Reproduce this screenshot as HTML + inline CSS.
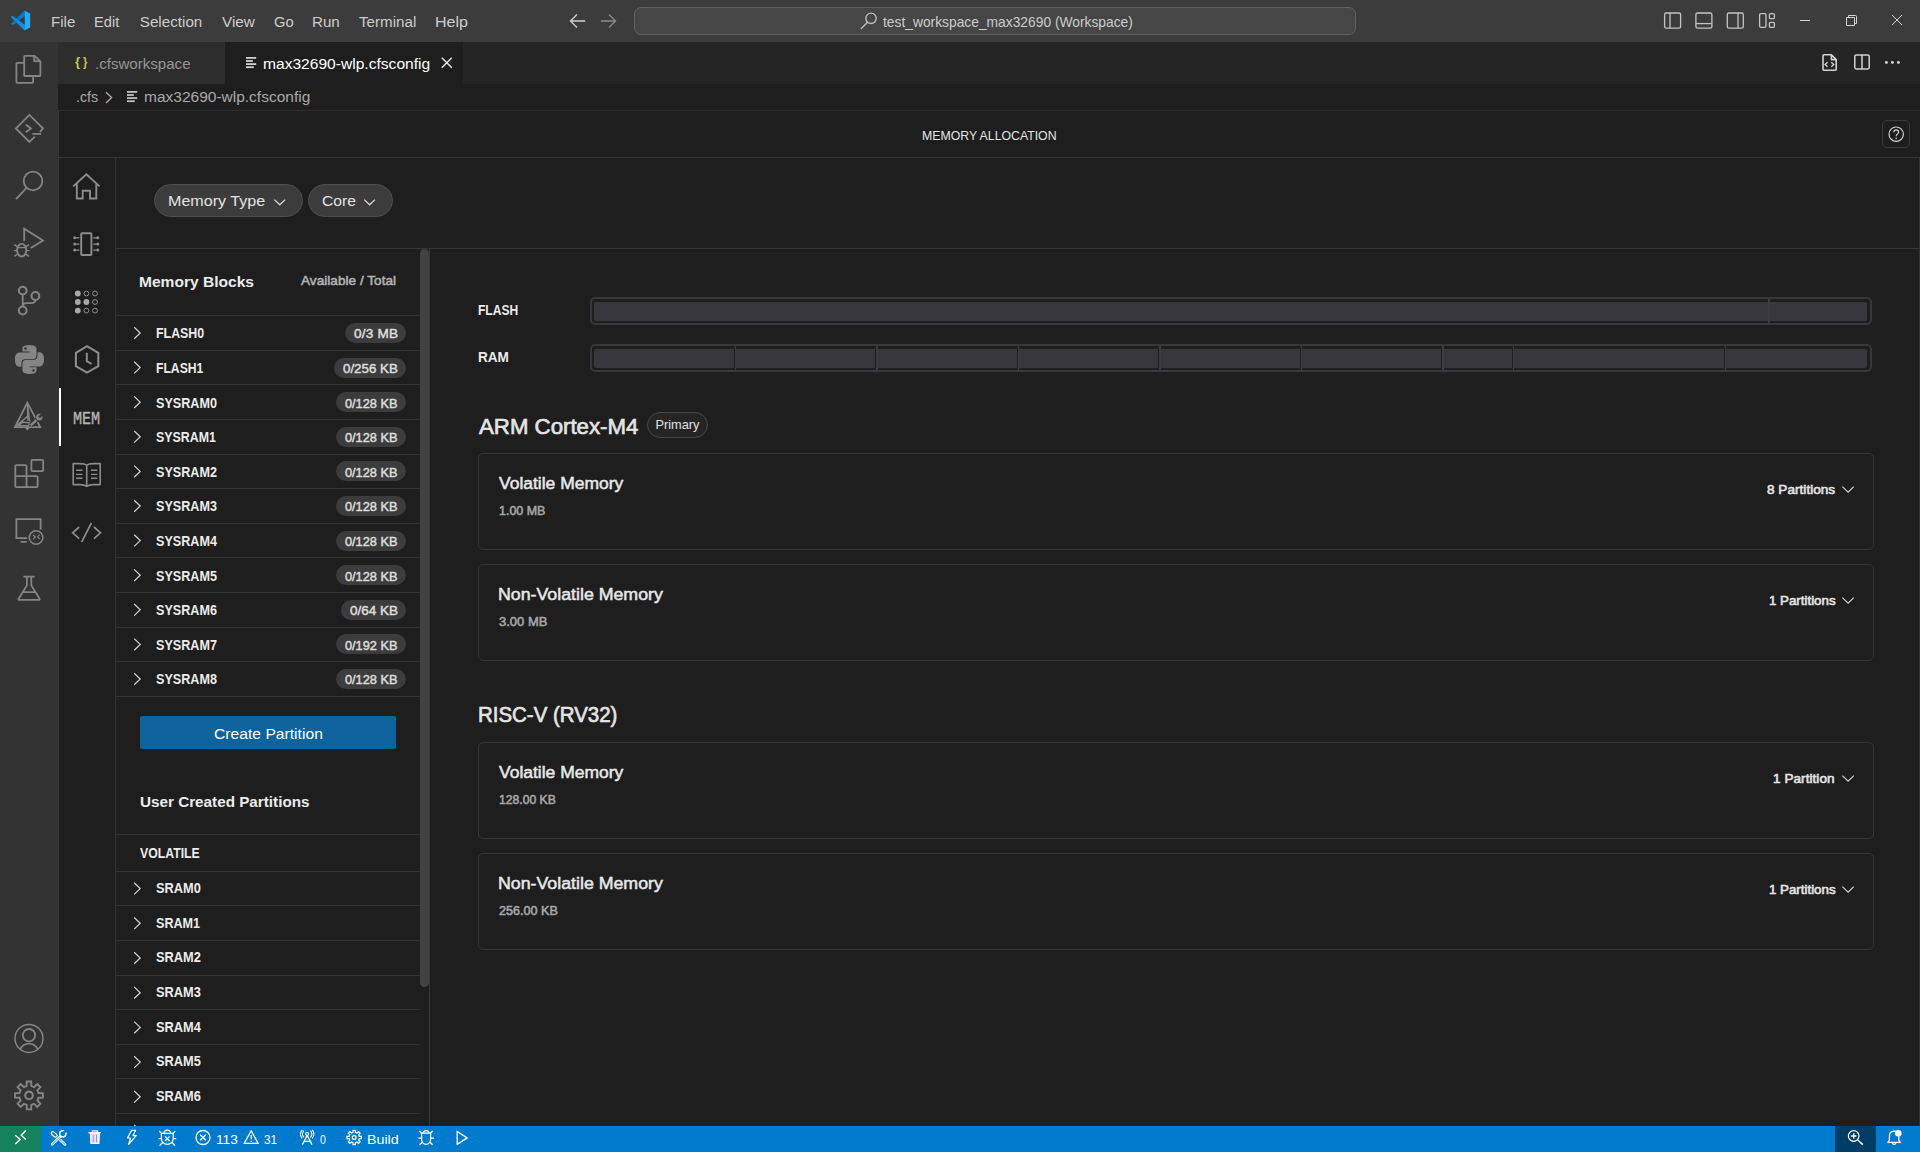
<!DOCTYPE html>
<html lang="en">
<head>
<meta charset="utf-8">
<title>max32690-wlp.cfsconfig - test_workspace_max32690 (Workspace)</title>
<style>
*{box-sizing:border-box;margin:0;padding:0}
html,body{width:1920px;height:1152px;overflow:hidden;background:#1e1e1e}
body{position:relative;font-family:"Liberation Sans",sans-serif;color:#cccccc;font-size:15px;-webkit-font-smoothing:antialiased}
.abs{position:absolute}
.t{position:absolute;white-space:nowrap;line-height:1;transform-origin:0 0}
.b{font-weight:bold}
svg{position:absolute;overflow:visible}
.hl{position:absolute;height:1px;background:#333333}
.vl{position:absolute;width:1px;background:#333333}
/* title bar */
#titlebar{left:0;top:0;width:1920px;height:42px;background:#3c3c3c}
#search{left:634px;top:7px;width:722px;height:28px;background:#464646;border:1px solid #616161;border-radius:7px}
/* activity bar */
#activity{left:0;top:42px;width:58px;height:1084px;background:#333333}
/* tabs */
#tabs{left:58px;top:42px;width:1862px;height:42px;background:#252526}
#tab1{left:58px;top:42px;width:167px;height:42px;background:#2d2d2d}
#tab2{left:225px;top:42px;width:238px;height:42px;background:#1e1e1e}
/* status */
#status{left:0;top:1126px;width:1920px;height:26px;background:#007acc}
#remote{left:0;top:1126px;width:41px;height:26px;background:#16825d}
#zoomitem{left:1835px;top:1126px;width:41px;height:26px;background:#003d66}
/* webview */
.pill{position:absolute;height:33px;border-radius:17px;background:#3c3c3c;border:1px solid #4e4e4e}
.badge{position:absolute;height:20px;border-radius:10px;background:#3c3c3c}
.card{position:absolute;left:478px;width:1396px;height:97px;border:1px solid #363636;border-radius:5px}
.bar{position:absolute;left:590px;width:1282px;height:28px;border:2px solid #37373d;border-radius:5px}
.seg{position:absolute;top:2px;height:20px;background:#37373d}
.sep{position:absolute;top:0;width:2px;height:24px;background:#37373d}
#scroll{left:420px;top:249px;width:9px;height:738px;background:#424242;border-radius:5px}
#createbtn{left:140px;top:716px;width:256px;height:33px;background:#0e639c}
</style>
</head>
<body>
<!-- ===== TITLE BAR ===== -->
<div id="titlebar" class="abs"></div>
<div id="search" class="abs"></div>
<!-- ===== ACTIVITY BAR ===== -->
<div id="activity" class="abs"></div>
<!-- ===== TABS ===== -->
<div id="tabs" class="abs"></div>
<div id="tab1" class="abs"></div>
<div id="tab2" class="abs"></div>
<!-- ===== WEBVIEW LINES ===== -->
<div class="hl" style="left:59px;top:110px;width:1861px;background:#2f2f2f"></div>
<div class="hl" style="left:59px;top:157px;width:1861px;background:#353535"></div>
<div class="vl" style="left:115px;top:158px;height:968px"></div>
<div class="hl" style="left:116px;top:248px;width:1804px;background:#353535"></div>
<div class="vl" style="left:429px;top:249px;height:877px;background:#383838"></div>
<div class="vl" style="left:1919px;top:158px;height:968px"></div>
<svg style="left:0;top:0" width="42" height="42" viewBox="0 0 42 42">
<polygon points="10.9,23.9 12.5,25.2 25.2,15.9 25.2,10.8 23.9,10.9" fill="#0079c6"/>
<polygon points="10.9,17.0 12.5,15.7 25.2,25.0 25.2,30.2 23.9,30.0" fill="#0b8fe2"/>
<polygon points="24.8,10.8 30.2,13.5 30.2,27.4 24.8,30.2" fill="#25a9f1"/>
</svg>
<span class="t" style="left:50.91px;top:13.70px;font-size:15.2px;color:#cccccc;transform:scaleX(0.9946);">File</span>
<span class="t" style="left:94.04px;top:13.70px;font-size:15.2px;color:#cccccc;transform:scaleX(0.9634);">Edit</span>
<span class="t" style="left:139.80px;top:13.70px;font-size:15.2px;color:#cccccc;">Selection</span>
<span class="t" style="left:221.50px;top:13.70px;font-size:15.2px;color:#cccccc;transform:scaleX(1.0069);">View</span>
<span class="t" style="left:273.80px;top:13.70px;font-size:15.2px;color:#cccccc;transform:scaleX(0.9741);">Go</span>
<span class="t" style="left:312.10px;top:13.70px;font-size:15.2px;color:#cccccc;transform:scaleX(0.9957);">Run</span>
<span class="t" style="left:359.40px;top:13.70px;font-size:15.2px;color:#cccccc;transform:scaleX(0.9980);">Terminal</span>
<span class="t" style="left:435.24px;top:13.70px;font-size:15.2px;color:#cccccc;transform:scaleX(1.0574);">Help</span>
<span class="t" style="left:883.30px;top:14.60px;font-size:14.2px;color:#cccccc;transform:scaleX(0.9731);">test_workspace_max32690 (Workspace)</span>
<svg style="left:0;top:0" width="1920" height="42" viewBox="0 0 1920 42" fill="none" stroke-linecap="square">
<g stroke="#d0d0d0" stroke-width="1.3"><path d="M570.5 21H584.5M576.5 15L570.5 21L576.5 27"/></g>
<g stroke="#8a8a8a" stroke-width="1.3"><path d="M601.5 21H615.5M609.5 15L615.5 21L609.5 27"/></g>
<g stroke="#bdbdbd" stroke-width="1.4" stroke-linecap="round"><circle cx="871" cy="18.3" r="5.2"/><path d="M867.5 22.3L861.3 28.6"/></g>
<g stroke="#c4c4c4" stroke-width="1.3" stroke-linecap="butt">
<rect x="1664.6" y="13" width="16" height="15.2" rx="1.6"/><path d="M1670 13V28.2"/>
<rect x="1695.9" y="13" width="16" height="15.2" rx="1.6"/><path d="M1695.9 23.6H1711.9"/>
<rect x="1727.3" y="13" width="16" height="15.2" rx="1.6"/><path d="M1738 13V28.2"/>
<rect x="1759.6" y="13.6" width="6.4" height="13.8" rx="1.4"/><rect x="1769.4" y="13.6" width="5" height="5" rx="1.2"/><rect x="1769.4" y="22.4" width="5" height="5" rx="1.2"/>
</g>
<g stroke="#d4d4d4" stroke-width="1" stroke-linecap="butt">
<path d="M1800 20.5H1810"/>
<path d="M1846.5 17.5H1854.5V25.5H1846.5Z"/><path d="M1848.5 17.5V15.5H1855.5Q1856.5 15.5 1856.5 16.5V23.5H1854.5"/>
<path d="M1892 15L1902 25M1902 15L1892 25"/>
</g>
</svg>
<svg style="left:0;top:0" width="58" height="1126" viewBox="0 0 58 1126" fill="none" stroke="#858585" stroke-width="1.8" stroke-linejoin="round">
<path d="M24.2 76V56.6Q24.2 55.9 24.9 55.9H34.6L40.4 61.4V75.3Q40.4 76 39.7 76H24.9Q24.2 76 24.2 75.3M34.2 56V61.2H40.2"/>
<path d="M24 62.9H17.1Q16.4 62.9 16.4 63.6V82.1Q16.4 82.8 17.1 82.8H32.4Q33.1 82.8 33.1 82.1V76.4"/>
<path d="M40 132L42.9 128.4L29.4 114.9L15.9 128.4L29.4 141.9L34.8 136.6" stroke-linejoin="miter"/><path d="M25.7 124.6L31 128.4L25.7 132.2M32.4 133.8H41.2" stroke-linejoin="miter"/>
<circle cx="33" cy="181" r="9.3"/><path d="M26.6 187.9L16 199.2"/>
<path d="M24.2 241V228.7L43 240.4L30.8 248" stroke-linejoin="miter"/>
<ellipse cx="21.7" cy="250.2" rx="4.6" ry="6.3"/><path d="M17.3 247.6H26.1M14.3 244.6L17.4 246.6M29.1 244.6L26 246.6M14 250.6H17.1M29.4 250.6H26.3M14.3 256.4L17.6 254.2M29.1 256.4L25.8 254.2" stroke-width="1.4"/>
<circle cx="22.7" cy="290.6" r="3.9" stroke-width="2"/><circle cx="35.4" cy="296" r="3.9" stroke-width="2"/><circle cx="22.7" cy="310.5" r="3.9" stroke-width="2"/><path d="M22.7 294.8V306.3M35.4 300.2Q35 303.2 31 303.2H26Q23.2 303.4 22.8 305.6"/>
<g transform="translate(14.9,345) scale(1.215)" fill="#858585" stroke="none"><path d="M11.9 0C5.8 0 6.2 2.6 6.2 2.6V5.4H12V6.2H3.9S0 5.8 0 11.9C0 18 3.4 17.8 3.4 17.8H5.4V15S5.3 11.6 8.8 11.6H14.6S17.8 11.6 17.8 8.4V3.2S18.3 0 11.9 0ZM8.7 1.8A1.05 1.05 0 1 1 8.7 3.9A1.05 1.05 0 1 1 8.7 1.8Z" fill-rule="evenodd"/><path d="M12.1 23.8C18.2 23.8 17.8 21.2 17.8 21.2V18.4H12V17.6H20.1S24 18 24 11.9C24 5.8 20.6 6 20.6 6H18.6V8.800000000000001S18.7 12.2 15.2 12.2H9.4S6.2 12.2 6.2 15.4V20.6S5.7 23.8 12.1 23.8ZM15.3 22A1.05 1.05 0 1 1 15.3 19.9A1.05 1.05 0 1 1 15.3 22Z" fill-rule="evenodd"/></g>
<path d="M27.3 402.6L15 427.2H40.2Z" stroke-width="1.8" stroke-linejoin="miter"/>
<path d="M27.3 403L27.9 420.4M27.6 405L29.8 421.6M15.6 426.6L27.2 416.4M24 419.2L27.8 416.6V421M22.6 421.8L31.2 423.2M18.6 425.6L22.8 422.2L30 423.2L28.4 425.6Z" stroke-width="1.3" stroke-linejoin="miter"/>
<path d="M24.8 427.8H29.8L27.3 430.6Z" fill="#858585" stroke="none"/>
<path d="M30.8 425.4L37.6 419" stroke="#333333" stroke-width="4.4"/><path d="M30.8 425.4L37.6 419" stroke-width="2.5"/>
<circle cx="39.3" cy="417.2" r="3.7" fill="#858585" stroke="#333333" stroke-width="0.8"/><path d="M39.1 417.4L43.4 413.2" stroke="#333333" stroke-width="2.3"/>
<path d="M26.5 476.1V466.1Q26.5 465.1 25.5 465.1H16.3Q15.3 465.1 15.3 466.1V486.1Q15.3 487.1 16.3 487.1H36.6Q37.6 487.1 37.6 486.1V477.1Q37.6 476.1 36.6 476.1H15.3M26.5 476.1V487.1"/><rect x="31.4" y="459.9" width="11.8" height="11.3" rx="1.2"/>
<path d="M27.2 538.2H16.4V519.2H40.6V529.4M20.6 541.8H26.8" stroke-linejoin="miter"/><circle cx="36.05" cy="537.5" r="6.8" stroke-width="1.5"/><path d="M33 535L35.4 537L33 539.2M39.8 534.6L37.4 536.8L39.8 539" stroke-width="1.1"/>
<path d="M23.4 576.7H34.7M26.9 577V585.4L18.6 598.8Q18.2 599.9 19.4 599.9H38.8Q40 599.9 39.6 598.8L31.3 585.4V577M22.5 592.1H35.7"/>
<circle cx="29" cy="1038.4" r="14" stroke-width="1.5"/><circle cx="29" cy="1035.2" r="6.2"/><path d="M20.4 1049.2A9.4 9.4 0 0 1 37.6 1049.2"/>
<path d="M26.71 1085.87L26.79 1081.47L31.21 1081.47L31.29 1085.87L34.12 1087.04L37.29 1083.99L40.41 1087.11L37.36 1090.28L38.53 1093.11L42.93 1093.19L42.93 1097.61L38.53 1097.69L37.36 1100.52L40.41 1103.69L37.29 1106.81L34.12 1103.76L31.29 1104.93L31.21 1109.33L26.79 1109.33L26.71 1104.93L23.88 1103.76L20.71 1106.81L17.59 1103.69L20.64 1100.52L19.47 1097.69L15.07 1097.61L15.07 1093.19L19.47 1093.11L20.64 1090.28L17.59 1087.11L20.71 1083.99L23.88 1087.04Z" stroke-width="1.9" stroke-linejoin="miter"/><circle cx="29" cy="1095.4" r="3.8" stroke-width="2.1"/>
</svg>
<span class="t" style="left:74.90px;top:55.20px;font-size:13.6px;color:#cbcb41;font-weight:bold;transform:scaleX(0.9600);">{</span>
<span class="t" style="left:83.00px;top:55.20px;font-size:13.6px;color:#cbcb41;font-weight:bold;transform:scaleX(0.8167);">}</span>
<span class="t" style="left:95.41px;top:56.10px;font-size:15.2px;color:#969696;transform:scaleX(0.9929);">.cfsworkspace</span>
<svg style="left:245.8px;top:56.8px" width="11" height="12" viewBox="0 0 11 12" fill="#d0d0d0"><rect x="0" y="0" width="10.2" height="1.8"/><rect x="0" y="3.1" width="6.8" height="1.8"/><rect x="0" y="6.2" width="10.2" height="1.8"/><rect x="0" y="9.3" width="7.8" height="1.8"/></svg>
<span class="t" style="left:263.27px;top:56.10px;font-size:15.2px;color:#ffffff;transform:scaleX(1.0261);">max32690-wlp.cfsconfig</span>
<svg style="left:0;top:42px" width="1920" height="42" viewBox="0 42 1920 42" fill="none" stroke="#e6e6e6" stroke-width="1.5"><path d="M441.8 57.8L451.8 67.8M451.8 57.8L441.8 67.8"/></svg>
<svg style="left:1800px;top:42px" width="120" height="42" viewBox="1800 42 120 42" fill="none" stroke="#d2d2d2" stroke-width="1.6" stroke-linejoin="round"><path d="M1831.4 54.8H1824Q1823 54.8 1823 55.8V69.2Q1823 70.2 1824 70.2H1835.2Q1836.2 70.2 1836.2 69.2V59.6ZM1831.4 54.8V59.6H1836.2" /><path d="M1827.5 62.3L1825.1 64.5L1827.5 66.7M1831.3 62.3L1833.7 64.5L1831.3 66.7" stroke-width="1.4" stroke-linejoin="miter"/><rect x="1854.8" y="55" width="14.4" height="14" rx="1.4" stroke-width="1.5"/><path d="M1862 55V69" stroke-width="1.5"/><g fill="#d2d2d2" stroke="none"><circle cx="1886.4" cy="62.5" r="1.45"/><circle cx="1892.4" cy="62.5" r="1.45"/><circle cx="1898.4" cy="62.5" r="1.45"/></g></svg>
<span class="t" style="left:76.26px;top:89.20px;font-size:15.2px;color:#a9a9a9;transform:scaleX(0.9378);">.cfs</span>
<svg style="left:0;top:84px" width="400" height="26" viewBox="0 84 400 26" fill="none" stroke="#a9a9a9" stroke-width="1.4"><path d="M106 92.2L111.6 97.6L106 103"/></svg>
<svg style="left:126.8px;top:91.2px" width="11" height="12" viewBox="0 0 11 12" fill="#c0c0c0"><rect x="0" y="0" width="10.2" height="1.8"/><rect x="0" y="3.1" width="6.8" height="1.8"/><rect x="0" y="6.2" width="10.2" height="1.8"/><rect x="0" y="9.3" width="7.8" height="1.8"/></svg>
<span class="t" style="left:144.18px;top:89.20px;font-size:15.2px;color:#a9a9a9;transform:scaleX(1.0206);">max32690-wlp.cfsconfig</span>
<span class="t" style="left:922.05px;top:129.95px;font-size:12.9px;color:#e4e4e4;transform:scaleX(0.9535);">MEMORY ALLOCATION</span>
<div class="abs" style="left:1882px;top:120px;width:28px;height:28px;border:1px solid #3a3a3a;border-radius:5px"></div>
<svg style="left:1882px;top:120px" width="28" height="28" viewBox="0 0 28 28" fill="none" stroke="#d0d0d0" stroke-width="1.2"><circle cx="14.2" cy="14.2" r="7.2"/><path d="M11.8 12.2Q11.8 9.8 14.2 9.8Q16.6 9.8 16.6 12Q16.6 13.4 15.2 14.2Q14.2 14.8 14.2 16.2" stroke-width="1.2"/><circle cx="14.2" cy="18.4" r="0.8" fill="#d0d0d0" stroke="none"/></svg>
<div class="abs" style="left:58px;top:110px;width:1px;height:1016px;background:#383838"></div>
<div class="abs" style="left:59px;top:388px;width:2px;height:58px;background:#ffffff"></div>
<svg style="left:58px;top:0" width="58" height="1126" viewBox="58 0 58 1126" fill="none" stroke="#8c8c8c" stroke-width="1.9" stroke-linejoin="miter">
<path d="M73.2 186.4L86.4 174.2L99.6 186.4M76.8 183.6V198.5H82.7V190.8H90V198.5H96.3V183.6"/>
<rect x="81.2" y="233.2" width="10.2" height="21.8" rx="0.8"/><g stroke-width="1.3"><path d="M75 237.8H79.4M75 244.1H79.4M75 250.1H79.4M93.2 237.8H97.6M93.2 244.1H97.6M93.2 250.1H97.6"/></g>
<circle cx="74.7" cy="237.8" r="1.5" fill="#8c8c8c" stroke="none"/><circle cx="97.8" cy="237.8" r="1.5" fill="#8c8c8c" stroke="none"/>
<circle cx="74.7" cy="244.1" r="1.5" fill="#8c8c8c" stroke="none"/><circle cx="97.8" cy="244.1" r="1.5" fill="#8c8c8c" stroke="none"/>
<circle cx="74.7" cy="250.1" r="1.5" fill="#8c8c8c" stroke="none"/><circle cx="97.8" cy="250.1" r="1.5" fill="#8c8c8c" stroke="none"/>
<circle cx="77.8" cy="293.5" r="2.9" fill="#a8a8a8" stroke="none"/>
<circle cx="77.8" cy="302" r="2.9" fill="#a8a8a8" stroke="none"/>
<circle cx="77.8" cy="310.6" r="2.9" fill="#a8a8a8" stroke="none"/>
<circle cx="86.4" cy="293.5" r="2.4" stroke-width="0.9" stroke="#9a9a9a"/>
<circle cx="86.4" cy="302" r="2.9" fill="#a8a8a8" stroke="none"/>
<circle cx="86.4" cy="310.6" r="2.4" stroke-width="0.9" stroke="#9a9a9a"/>
<circle cx="95" cy="293.5" r="2.4" stroke-width="0.9" stroke="#9a9a9a"/>
<circle cx="95" cy="302" r="2.4" stroke-width="0.9" stroke="#9a9a9a"/>
<circle cx="95" cy="310.6" r="2.4" stroke-width="0.9" stroke="#9a9a9a"/>
<path d="M87 346.2L98.3 352.8V366.2L87 372.6L75.9 366.2V352.8Z" stroke-width="2.1"/><path d="M86.8 352.8V361.2L91.6 364" stroke-width="2"/>
<path d="M86.7 465.2Q84.5 463.6 80 463.6H73.2V484.6H80Q84.5 484.6 86.7 486.4Q88.9 484.6 93.4 484.6H100.2V463.6H93.4Q88.9 463.6 86.7 465.2V486" stroke-width="1.6" stroke-linejoin="round"/><path d="M76.1 470.3H82.5M76.1 474.4H82.5M76.1 478.3H82.5M91 470.3H97.3M91 474.4H97.3M91 478.3H97.3" stroke-width="1.4"/>
<path d="M79.2 527L72.7 532.8L79.2 538.7M91.4 523L81.6 542.2M94 527L100.5 532.8L94 538.7" stroke-width="1.7"/>
</svg>
<span class="t" style="left:72.62px;top:411.00px;font-size:17.6px;color:#b4b4b4;-webkit-text-stroke:0.35px;letter-spacing:-0.088px;transform:scaleX(0.8600);font-family:'Liberation Mono',monospace;">MEM</span>
<div class="pill" style="left:154px;top:184px;width:149px"></div>
<div class="pill" style="left:308px;top:184px;width:85px"></div>
<span class="t" style="left:167.76px;top:192.75px;font-size:15.5px;color:#e2e2e2;transform:scaleX(1.0383);">Memory Type</span>
<span class="t" style="left:321.80px;top:192.75px;font-size:15.5px;color:#e2e2e2;transform:scaleX(1.0068);">Core</span>
<svg style="left:0;top:158px" width="500" height="90" viewBox="0 158 500 90" fill="none" stroke="#d8d8d8" stroke-width="1.3"><path d="M274.4 199.6L279.8 204.8L285.2 199.6M364.2 199.6L369.6 204.8L375 199.6"/></svg>
<div id="scroll" class="abs"></div>
<span class="t" style="left:139.18px;top:274.10px;font-size:15.2px;color:#ececec;font-weight:bold;transform:scaleX(1.0242);">Memory Blocks</span>
<span class="t" style="left:300.86px;top:274.60px;font-size:12.8px;color:#b4b4b4;-webkit-text-stroke:0.51px;letter-spacing:0.031px;transform:scaleX(1.0600);">Available / Total</span>
<div class="hl" style="left:116px;top:315.0px;width:304px;background:#333333"></div>
<div class="hl" style="left:116px;top:349.7px;width:304px;background:#333333"></div>
<span class="t" style="left:156.20px;top:326.30px;font-size:14.0px;color:#ececec;font-weight:bold;transform:scaleX(0.8854);">FLASH0</span>
<div class="badge" style="left:344.7px;top:323.0px;width:61.3px"></div>
<span class="t" style="left:353.63px;top:328.30px;font-size:12.8px;color:#dcdcdc;-webkit-text-stroke:0.46px;letter-spacing:0.195px;transform:scaleX(1.0600);">0/3 MB</span>
<div class="hl" style="left:116px;top:384.3px;width:304px;background:#333333"></div>
<span class="t" style="left:156.20px;top:360.90px;font-size:14.0px;color:#ececec;font-weight:bold;transform:scaleX(0.8690);">FLASH1</span>
<div class="badge" style="left:334.0px;top:357.6px;width:72.0px"></div>
<span class="t" style="left:342.83px;top:362.90px;font-size:12.8px;color:#dcdcdc;-webkit-text-stroke:0.46px;transform:scaleX(1.0408);">0/256 KB</span>
<div class="hl" style="left:116px;top:418.9px;width:304px;background:#333333"></div>
<span class="t" style="left:156.20px;top:395.50px;font-size:14.0px;color:#ececec;font-weight:bold;transform:scaleX(0.8999);">SYSRAM0</span>
<div class="badge" style="left:336.0px;top:392.2px;width:70.0px"></div>
<span class="t" style="left:344.93px;top:397.50px;font-size:12.8px;color:#dcdcdc;-webkit-text-stroke:0.46px;">0/128 KB</span>
<div class="hl" style="left:116px;top:453.5px;width:304px;background:#333333"></div>
<span class="t" style="left:156.20px;top:430.10px;font-size:14.0px;color:#ececec;font-weight:bold;transform:scaleX(0.8852);">SYSRAM1</span>
<div class="badge" style="left:336.0px;top:426.8px;width:70.0px"></div>
<span class="t" style="left:344.93px;top:432.10px;font-size:12.8px;color:#dcdcdc;-webkit-text-stroke:0.46px;">0/128 KB</span>
<div class="hl" style="left:116px;top:488.1px;width:304px;background:#333333"></div>
<span class="t" style="left:156.20px;top:464.70px;font-size:14.0px;color:#ececec;font-weight:bold;transform:scaleX(0.8999);">SYSRAM2</span>
<div class="badge" style="left:336.0px;top:461.4px;width:70.0px"></div>
<span class="t" style="left:344.93px;top:466.70px;font-size:12.8px;color:#dcdcdc;-webkit-text-stroke:0.46px;">0/128 KB</span>
<div class="hl" style="left:116px;top:522.7px;width:304px;background:#333333"></div>
<span class="t" style="left:156.20px;top:499.30px;font-size:14.0px;color:#ececec;font-weight:bold;transform:scaleX(0.8999);">SYSRAM3</span>
<div class="badge" style="left:336.0px;top:496.0px;width:70.0px"></div>
<span class="t" style="left:344.93px;top:501.30px;font-size:12.8px;color:#dcdcdc;-webkit-text-stroke:0.46px;">0/128 KB</span>
<div class="hl" style="left:116px;top:557.3px;width:304px;background:#333333"></div>
<span class="t" style="left:156.20px;top:533.90px;font-size:14.0px;color:#ececec;font-weight:bold;transform:scaleX(0.8999);">SYSRAM4</span>
<div class="badge" style="left:336.0px;top:530.6px;width:70.0px"></div>
<span class="t" style="left:344.93px;top:535.90px;font-size:12.8px;color:#dcdcdc;-webkit-text-stroke:0.46px;">0/128 KB</span>
<div class="hl" style="left:116px;top:591.9px;width:304px;background:#333333"></div>
<span class="t" style="left:156.20px;top:568.50px;font-size:14.0px;color:#ececec;font-weight:bold;transform:scaleX(0.8999);">SYSRAM5</span>
<div class="badge" style="left:336.0px;top:565.2px;width:70.0px"></div>
<span class="t" style="left:344.93px;top:570.50px;font-size:12.8px;color:#dcdcdc;-webkit-text-stroke:0.46px;">0/128 KB</span>
<div class="hl" style="left:116px;top:626.5px;width:304px;background:#333333"></div>
<span class="t" style="left:156.20px;top:603.10px;font-size:14.0px;color:#ececec;font-weight:bold;transform:scaleX(0.8999);">SYSRAM6</span>
<div class="badge" style="left:340.7px;top:599.8px;width:65.3px"></div>
<span class="t" style="left:349.53px;top:605.10px;font-size:12.8px;color:#dcdcdc;-webkit-text-stroke:0.46px;transform:scaleX(1.0565);">0/64 KB</span>
<div class="hl" style="left:116px;top:661.1px;width:304px;background:#333333"></div>
<span class="t" style="left:156.20px;top:637.70px;font-size:14.0px;color:#ececec;font-weight:bold;transform:scaleX(0.8999);">SYSRAM7</span>
<div class="badge" style="left:336.0px;top:634.4px;width:70.0px"></div>
<span class="t" style="left:345.23px;top:639.70px;font-size:12.8px;color:#dcdcdc;-webkit-text-stroke:0.46px;transform:scaleX(0.9947);">0/192 KB</span>
<div class="hl" style="left:116px;top:695.7px;width:304px;background:#333333"></div>
<span class="t" style="left:156.20px;top:672.30px;font-size:14.0px;color:#ececec;font-weight:bold;transform:scaleX(0.8999);">SYSRAM8</span>
<div class="badge" style="left:336.0px;top:669.0px;width:70.0px"></div>
<span class="t" style="left:344.93px;top:674.30px;font-size:12.8px;color:#dcdcdc;-webkit-text-stroke:0.46px;">0/128 KB</span>
<div id="createbtn" class="abs" style="border-radius:2px"></div>
<span class="t" style="left:213.80px;top:725.90px;font-size:15.2px;color:#ffffff;transform:scaleX(1.0317);">Create Partition</span>
<span class="t" style="left:140.20px;top:793.60px;font-size:15.2px;color:#ececec;font-weight:bold;transform:scaleX(1.0044);">User Created Partitions</span>
<div class="hl" style="left:116px;top:834.0px;width:304px;background:#333333"></div>
<span class="t" style="left:140.00px;top:845.90px;font-size:14.0px;color:#ececec;font-weight:bold;transform:scaleX(0.8755);">VOLATILE</span>
<div class="hl" style="left:116px;top:871.0px;width:304px;background:#333333"></div>
<div class="hl" style="left:116px;top:905.0px;width:304px;background:#333333"></div>
<span class="t" style="left:156.20px;top:880.90px;font-size:14.0px;color:#ececec;font-weight:bold;transform:scaleX(0.9163);">SRAM0</span>
<div class="hl" style="left:116px;top:940.0px;width:304px;background:#333333"></div>
<span class="t" style="left:156.20px;top:915.60px;font-size:14.0px;color:#ececec;font-weight:bold;transform:scaleX(0.8980);">SRAM1</span>
<div class="hl" style="left:116px;top:975.0px;width:304px;background:#333333"></div>
<span class="t" style="left:156.20px;top:950.30px;font-size:14.0px;color:#ececec;font-weight:bold;transform:scaleX(0.9163);">SRAM2</span>
<div class="hl" style="left:116px;top:1009.0px;width:304px;background:#333333"></div>
<span class="t" style="left:156.20px;top:985.00px;font-size:14.0px;color:#ececec;font-weight:bold;transform:scaleX(0.9163);">SRAM3</span>
<div class="hl" style="left:116px;top:1044.0px;width:304px;background:#333333"></div>
<span class="t" style="left:156.20px;top:1019.70px;font-size:14.0px;color:#ececec;font-weight:bold;transform:scaleX(0.9163);">SRAM4</span>
<div class="hl" style="left:116px;top:1078.0px;width:304px;background:#333333"></div>
<span class="t" style="left:156.20px;top:1054.40px;font-size:14.0px;color:#ececec;font-weight:bold;transform:scaleX(0.9163);">SRAM5</span>
<div class="hl" style="left:116px;top:1113.0px;width:304px;background:#333333"></div>
<span class="t" style="left:156.20px;top:1089.10px;font-size:14.0px;color:#ececec;font-weight:bold;transform:scaleX(0.9163);">SRAM6</span>
<svg style="left:0;top:0" width="430" height="1126" viewBox="0 0 430 1126" fill="none" stroke="#cfcfcf" stroke-width="1.25"><path d="M134.2 327.2L140.2 333.0L134.2 338.8M134.2 361.8L140.2 367.6L134.2 373.4M134.2 396.4L140.2 402.2L134.2 408.0M134.2 431.0L140.2 436.8L134.2 442.6M134.2 465.6L140.2 471.4L134.2 477.2M134.2 500.2L140.2 506.0L134.2 511.8M134.2 534.8L140.2 540.6L134.2 546.4M134.2 569.4L140.2 575.2L134.2 581.0M134.2 604.0L140.2 609.8L134.2 615.6M134.2 638.6L140.2 644.4L134.2 650.2M134.2 673.2L140.2 679.0L134.2 684.8M134.2 882.8L140.2 888.6L134.2 894.4M134.2 917.5L140.2 923.3L134.2 929.1M134.2 952.2L140.2 958.0L134.2 963.8M134.2 986.9L140.2 992.7L134.2 998.5M134.2 1021.6L140.2 1027.4L134.2 1033.2M134.2 1056.3L140.2 1062.1L134.2 1067.9M134.2 1091.0L140.2 1096.8L134.2 1102.6M134.2 1124.9L140.2 1130.7L134.2 1136.5"/></svg>
<div class="bar" style="top:297px"><div class="abs" style="left:2px;top:3px;right:3px;height:19px;background:#37373d;border-radius:2px"></div><div class="abs" style="left:1175.50px;top:0;width:1px;height:24px;background:#1e1e1e"></div><div class="abs" style="left:1176.40px;top:0;width:1.5px;height:24px;background:#3c3c43"></div></div>
<div class="bar" style="top:344px"><div class="abs" style="left:2px;top:3px;right:3px;height:19px;background:#37373d;border-radius:2px"></div><div class="abs" style="left:141.85px;top:0;width:1px;height:24px;background:#1e1e1e"></div><div class="abs" style="left:142.75px;top:0;width:1.5px;height:24px;background:#3c3c43"></div><div class="abs" style="left:283.30px;top:0;width:1px;height:24px;background:#1e1e1e"></div><div class="abs" style="left:284.20px;top:0;width:1.5px;height:24px;background:#3c3c43"></div><div class="abs" style="left:424.75px;top:0;width:1px;height:24px;background:#1e1e1e"></div><div class="abs" style="left:425.65px;top:0;width:1.5px;height:24px;background:#3c3c43"></div><div class="abs" style="left:566.20px;top:0;width:1px;height:24px;background:#1e1e1e"></div><div class="abs" style="left:567.10px;top:0;width:1.5px;height:24px;background:#3c3c43"></div><div class="abs" style="left:707.65px;top:0;width:1px;height:24px;background:#1e1e1e"></div><div class="abs" style="left:708.55px;top:0;width:1.5px;height:24px;background:#3c3c43"></div><div class="abs" style="left:849.10px;top:0;width:1px;height:24px;background:#1e1e1e"></div><div class="abs" style="left:850.00px;top:0;width:1.5px;height:24px;background:#3c3c43"></div><div class="abs" style="left:919.82px;top:0;width:1px;height:24px;background:#1e1e1e"></div><div class="abs" style="left:920.72px;top:0;width:1.5px;height:24px;background:#3c3c43"></div><div class="abs" style="left:1132.00px;top:0;width:1px;height:24px;background:#1e1e1e"></div><div class="abs" style="left:1132.90px;top:0;width:1.5px;height:24px;background:#3c3c43"></div></div>
<span class="t" style="left:478.20px;top:303.00px;font-size:14.0px;color:#ececec;font-weight:bold;transform:scaleX(0.8614);">FLASH</span>
<span class="t" style="left:478.20px;top:350.00px;font-size:14.0px;color:#ececec;font-weight:bold;transform:scaleX(0.9705);">RAM</span>
<span class="t" style="left:478.63px;top:415.60px;font-size:22.2px;color:#e4e4e4;-webkit-text-stroke:0.67px;transform:scaleX(1.0022);">ARM Cortex-M4</span>
<div class="abs" style="left:647px;top:412px;width:61px;height:26px;border:1px solid #484848;border-radius:14px;background:#252526"></div>
<span class="t" style="left:655.40px;top:418.70px;font-size:12.8px;color:#e0e0e0;">Primary</span>
<span class="t" style="left:477.71px;top:704.00px;font-size:22.2px;color:#e4e4e4;-webkit-text-stroke:0.67px;transform:scaleX(0.9211);">RISC-V (RV32)</span>
<div class="card" style="top:453px"></div>
<span class="t" style="left:499.05px;top:476.10px;font-size:16.8px;color:#e8e8e8;-webkit-text-stroke:0.50px;transform:scaleX(1.0409);">Volatile Memory</span>
<span class="t" style="left:498.89px;top:505.10px;font-size:12.8px;color:#a6a6a6;-webkit-text-stroke:0.58px;transform:scaleX(0.9725);">1.00 MB</span>
<span class="t" style="left:1766.99px;top:483.90px;font-size:12.8px;color:#e4e4e4;-webkit-text-stroke:0.58px;letter-spacing:0.025px;transform:scaleX(1.0600);">8 Partitions</span>
<div class="card" style="top:564px"></div>
<span class="t" style="left:497.99px;top:587.10px;font-size:16.8px;color:#e8e8e8;-webkit-text-stroke:0.50px;transform:scaleX(1.0582);">Non-Volatile Memory</span>
<span class="t" style="left:498.89px;top:616.10px;font-size:12.8px;color:#a6a6a6;-webkit-text-stroke:0.58px;transform:scaleX(1.0149);">3.00 MB</span>
<span class="t" style="left:1768.59px;top:594.90px;font-size:12.8px;color:#e4e4e4;-webkit-text-stroke:0.58px;transform:scaleX(1.0394);">1 Partitions</span>
<div class="card" style="top:742px"></div>
<span class="t" style="left:499.05px;top:765.10px;font-size:16.8px;color:#e8e8e8;-webkit-text-stroke:0.50px;transform:scaleX(1.0409);">Volatile Memory</span>
<span class="t" style="left:498.89px;top:794.10px;font-size:12.8px;color:#a6a6a6;-webkit-text-stroke:0.58px;transform:scaleX(0.9509);">128.00 KB</span>
<span class="t" style="left:1773.29px;top:772.90px;font-size:12.8px;color:#e4e4e4;-webkit-text-stroke:0.58px;letter-spacing:0.045px;transform:scaleX(1.0600);">1 Partition</span>
<div class="card" style="top:853px"></div>
<span class="t" style="left:497.99px;top:876.10px;font-size:16.8px;color:#e8e8e8;-webkit-text-stroke:0.50px;transform:scaleX(1.0582);">Non-Volatile Memory</span>
<span class="t" style="left:498.89px;top:905.10px;font-size:12.8px;color:#a6a6a6;-webkit-text-stroke:0.58px;transform:scaleX(0.9847);">256.00 KB</span>
<span class="t" style="left:1768.59px;top:883.90px;font-size:12.8px;color:#e4e4e4;-webkit-text-stroke:0.58px;transform:scaleX(1.0394);">1 Partitions</span>
<svg style="left:0;top:0" width="1920" height="1126" viewBox="0 0 1920 1126" fill="none" stroke="#cfcfcf" stroke-width="1.25"><path d="M1842.4 486.6L1848.1 492.2L1853.8 486.6M1842.4 597.6L1848.1 603.2L1853.8 597.6M1842.4 775.6L1848.1 781.2L1853.8 775.6M1842.4 886.6L1848.1 892.2L1853.8 886.6"/></svg>
<!-- ===== STATUS BAR ===== -->
<div id="status" class="abs"></div>
<div id="remote" class="abs"></div>
<div id="zoomitem" class="abs"></div>
<svg style="left:0;top:1126px" width="1920" height="26" viewBox="0 1126 1920 26" fill="none" stroke="#ffffff" stroke-width="1.3" stroke-linejoin="round" stroke-linecap="butt">
<path d="M15.2 1135.2L20.2 1139.4L15.2 1144M25.8 1130.6L21.2 1135.2L25.8 1139.6" stroke-width="1.4" stroke-linejoin="miter"/>
<path d="M56.6 1136.4L65 1144.4" stroke-width="2.7" stroke-linecap="round"/><path d="M57 1136.8L65 1144.4" stroke="#007acc" stroke-width="0.8" stroke-linecap="round"/>
<ellipse cx="54.2" cy="1134.4" rx="3.5" ry="1.7" transform="rotate(40 54.2 1134.4)" fill="#007acc" stroke-width="1.2"/>
<path d="M52.2 1144.2L60.6 1136.2" stroke="#007acc" stroke-width="4"/><path d="M52.2 1144.2L60.6 1136.2" stroke-width="2.7" stroke-linecap="round"/><path d="M52.2 1144.2L60.8 1136" stroke="#007acc" stroke-width="0.8" stroke-linecap="round"/>
<circle cx="62.8" cy="1133.8" r="3.1" fill="#007acc" stroke-width="1.5"/><path d="M62.4 1134.2L67 1129.4" stroke="#007acc" stroke-width="2.6"/>
<path d="M90.4 1133.2L90.9 1143.4H98.9L99.4 1133.2Z" fill="#dfe3ff" stroke-width="1.2"/><path d="M88.5 1132.7H100.9M92.4 1132.4V1130.9H97.4V1132.4" stroke-width="1.4"/><path d="M93.3 1134.6V1142.2M96.5 1134.6V1142.2" stroke="#9a8cf0" stroke-width="1.0"/>
<path d="M131.6 1130.4H135.6L133 1135.6H136.2L128.6 1144.4L130.6 1138H127.4Z" stroke-width="1.2"/>
<path d="M161.4 1133.4H173.2V1139A5.9 5.4 0 0 1 161.4 1139ZM163.9 1133.2A3.45 3.6 0 0 1 170.7 1133.2M158.4 1138.6H161.2M173.4 1138.6H176.2M159.4 1131.2L161.6 1133.4M175.2 1131.2L173 1133.4M159.6 1145.6L162.4 1142.8M175 1145.6L172.2 1142.8" stroke-width="1.25"/><path d="M165 1136.4L169.6 1141M169.6 1136.4L165 1141" stroke-width="1.2"/>
<circle cx="203" cy="1137.5" r="7" stroke-width="1.3"/><path d="M200.2 1134.7L205.8 1140.3M205.8 1134.7L200.2 1140.3" stroke-width="1.3"/>
<path d="M251.2 1130.8L258.2 1143.4H244.2Z" stroke-width="1.3"/><path d="M251.2 1135V1139.6M251.2 1140.8V1142" stroke-width="1.2"/>
<path d="M302.4 1144.6L307.2 1135.4L312 1144.6M304.2 1141.4H310.2" stroke-width="1.3"/><circle cx="307.2" cy="1134" r="1.5" stroke-width="1.2"/><path d="M304 1130.6A4.6 4.6 0 0 0 304 1137.4M310.4 1130.6A4.6 4.6 0 0 1 310.4 1137.4M302.2 1129.8A6.8 6.8 0 0 0 302.2 1138.4M312.2 1129.8A6.8 6.8 0 0 1 312.2 1138.4" stroke-width="1.1"/>
<path d="M352.99 1132.44L353.11 1130.28L355.29 1130.28L355.41 1132.44L356.92 1133.07L358.54 1131.63L360.07 1133.16L358.63 1134.78L359.26 1136.29L361.42 1136.41L361.42 1138.59L359.26 1138.71L358.63 1140.22L360.07 1141.84L358.54 1143.37L356.92 1141.93L355.41 1142.56L355.29 1144.72L353.11 1144.72L352.99 1142.56L351.48 1141.93L349.86 1143.37L348.33 1141.84L349.77 1140.22L349.14 1138.71L346.98 1138.59L346.98 1136.41L349.14 1136.29L349.77 1134.78L348.33 1133.16L349.86 1131.63L351.48 1133.07Z" stroke-width="1.25" stroke-linejoin="miter"/><circle cx="354.2" cy="1137.5" r="1.9" stroke-width="1.25"/>
<path d="M421.6 1133.2H430.6V1139.2A4.5 5.3 0 0 1 421.6 1139.2ZM423.3 1133A2.85 3 0 0 1 428.9 1133M418.2 1138.2H421.4M430.8 1138.2H434M419.4 1131L421.7 1133.3M432.8 1131L430.5 1133.3M419.6 1144.8L422.2 1142.2M432.6 1144.8L430 1142.2" stroke-width="1.25"/>
<path d="M457.2 1131.4V1144.4L467.2 1137.9Z" stroke-width="1.3" stroke-linejoin="miter"/>
<circle cx="1853.7" cy="1136" r="5.3" stroke-width="1.2"/><path d="M1857.5 1139.8L1862.8 1144.6" stroke-width="1.5"/><path d="M1850.9 1136H1856.5M1853.7 1133.2V1138.8" stroke-width="1.4" stroke="#fffbe8"/>
<path d="M1888 1142.4L1889.4 1140.2V1136.4Q1889.4 1131.4 1894 1131.2Q1898.8 1131.4 1898.8 1136.4V1140.2L1900.2 1142.4ZM1892.2 1143A2 2 0 0 0 1896 1143" stroke-width="1.3"/><circle cx="1898.3" cy="1133.2" r="3.3" fill="#ffffff" stroke="none"/>
</svg>
<span class="t" style="left:215.99px;top:1133.20px;font-size:13.6px;color:#ffffff;transform:scaleX(1.0094);">113</span>
<span class="t" style="left:264.20px;top:1133.20px;font-size:13.6px;color:#ffffff;transform:scaleX(0.8654);">31</span>
<span class="t" style="left:319.70px;top:1133.20px;font-size:13.6px;color:#ffffff;transform:scaleX(0.7750);">0</span>
<span class="t" style="left:366.55px;top:1133.20px;font-size:13.6px;color:#ffffff;transform:scaleX(1.0465);">Build</span>
</body>
</html>
